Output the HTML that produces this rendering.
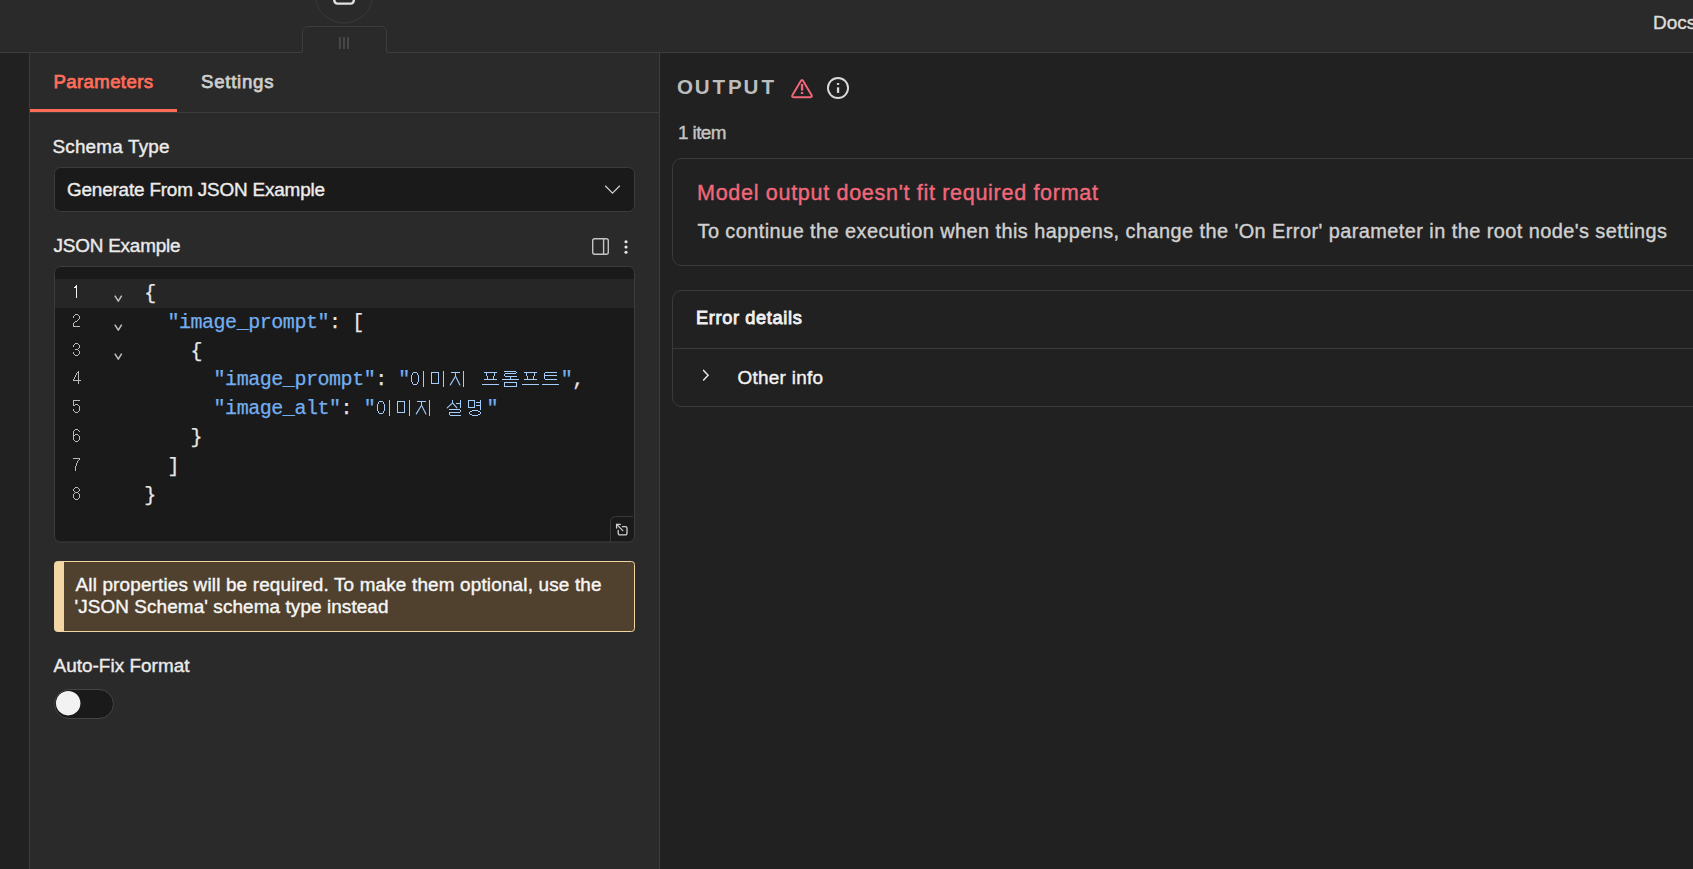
<!DOCTYPE html>
<html><head><meta charset="utf-8">
<style>
html,body{margin:0;padding:0;width:1693px;height:869px;overflow:hidden;background:#2a2a2a;position:relative}
</style></head><body>
<svg width="1693" height="869" viewBox="0 0 1693 869" style="position:absolute;left:0;top:0;font-family:'Liberation Sans',sans-serif">
<rect x="0" y="0" width="1693" height="53" fill="#2a2a2a"/>
<rect x="0" y="53" width="30" height="816" fill="#212121"/>
<rect x="30" y="53" width="630" height="816" fill="#2a2a2a"/>
<rect x="660" y="53" width="1033" height="816" fill="#212121"/>
<g fill="#3d3d3d" shape-rendering="crispEdges">
<rect x="0" y="52" width="1693" height="1"/>
<rect x="29" y="53" width="1" height="816"/>
<rect x="659" y="53" width="1" height="816"/>
</g>
<circle cx="344" cy="-6" r="29" fill="#2a2a2a" stroke="#3a3a3a" stroke-width="1"/>
<rect x="334.3" y="-8.5" width="19.5" height="12.1" rx="3" fill="none" stroke="#e2e2e2" stroke-width="2.4"/>
<path d="M302.5 53 V31.5 a5 5 0 0 1 5 -5 H381.5 a5 5 0 0 1 5 5 V53" fill="#2a2a2a" stroke="#3d3d3d" stroke-width="1"/>
<rect x="302" y="52" width="85" height="1" fill="#2a2a2a"/>
<g fill="#474747"><rect x="338.9" y="37" width="2" height="12" rx="0.6"/><rect x="343" y="37" width="2" height="12" rx="0.6"/><rect x="347" y="37" width="2" height="12" rx="0.6"/></g>
<text x="1653" y="28.5" font-size="19" font-weight="normal" fill="#dcdcdc" stroke="#dcdcdc" stroke-width="0.4">Docs</text>
<text x="53.5" y="87.5" font-size="18.6" font-weight="normal" fill="#ff6d5a" stroke="#ff6d5a" stroke-width="0.75" textLength="99.5" lengthAdjust="spacing">Parameters</text>
<text x="201" y="87.5" font-size="18.6" font-weight="normal" fill="#cecece" stroke="#cecece" stroke-width="0.75" textLength="72.5" lengthAdjust="spacing">Settings</text>
<rect x="30" y="112" width="629" height="1" fill="#3d3d3d" shape-rendering="crispEdges"/>
<rect x="30" y="109" width="147" height="3" fill="#ff6d5a" shape-rendering="crispEdges"/>
<text x="52.5" y="152.5" font-size="18.9" font-weight="normal" fill="#ebebeb" stroke="#ebebeb" stroke-width="0.4" textLength="117" lengthAdjust="spacing">Schema Type</text>
<rect x="54.5" y="167.5" width="580" height="44" rx="6" fill="#1a1a1a" stroke="#3c3c3c"/>
<text x="67" y="195.5" font-size="18.9" font-weight="normal" fill="#ececec" stroke="#ececec" stroke-width="0.4" textLength="258" lengthAdjust="spacing">Generate From JSON Example</text>
<path d="M605.2 185.8 L612.5 193.1 L619.8 185.8" fill="none" stroke="#cdcdcd" stroke-width="1.3"/>
<text x="53.5" y="252.0" font-size="18.9" font-weight="normal" fill="#ebebeb" stroke="#ebebeb" stroke-width="0.4" textLength="127" lengthAdjust="spacing">JSON Example</text>
<rect x="592.7" y="238.7" width="15.6" height="15.6" rx="2" fill="none" stroke="#c4c4c4" stroke-width="1.4"/>
<line x1="603.6" y1="238.7" x2="603.6" y2="254.3" stroke="#c4c4c4" stroke-width="1.4"/>
<g fill="#e8e8e8"><circle cx="626" cy="241.8" r="1.55"/><circle cx="626" cy="247" r="1.55"/><circle cx="626" cy="252.3" r="1.55"/></g>
<rect x="54.5" y="266.5" width="580" height="275.5" rx="6" fill="#1a1a1a" stroke="#3c3c3c"/>
<rect x="55" y="279" width="579" height="29" fill="#262626"/>
<g font-family="Liberation Mono" font-size="20" style="white-space:pre"><text x="144.30" y="298.90" fill="#e6e6e6" stroke="#e6e6e6" stroke-width="0.25">{</text><text x="167.39 178.94 190.48 202.03 213.58 225.12 236.67 248.21 259.76 271.31 282.85 294.40 305.94 317.49" y="327.70" fill="#73aff0" stroke="#73aff0" stroke-width="0.25">"image_prompt"</text><text x="329.04" y="327.70" fill="#e6e6e6" stroke="#e6e6e6" stroke-width="0.25">:</text><text x="352.13" y="327.70" fill="#e6e6e6" stroke="#e6e6e6" stroke-width="0.25">[</text><text x="190.48" y="356.50" fill="#e6e6e6" stroke="#e6e6e6" stroke-width="0.25">{</text><text x="213.58 225.12 236.67 248.21 259.76 271.31 282.85 294.40 305.94 317.49 329.04 340.58 352.13 363.67" y="385.30" fill="#73aff0" stroke="#73aff0" stroke-width="0.25">"image_prompt"</text><text x="375.22" y="385.30" fill="#e6e6e6" stroke="#e6e6e6" stroke-width="0.25">:</text><text x="398.31" y="385.30" fill="#73aff0" stroke="#73aff0" stroke-width="0.25">"</text><text x="560.70" y="385.30" fill="#73aff0" stroke="#73aff0" stroke-width="0.25">"</text><text x="572.30" y="385.30" fill="#e6e6e6" stroke="#e6e6e6" stroke-width="0.25">,</text><text x="213.58 225.12 236.67 248.21 259.76 271.31 282.85 294.40 305.94 317.49 329.04" y="414.10" fill="#73aff0" stroke="#73aff0" stroke-width="0.25">"image_alt"</text><text x="340.58" y="414.10" fill="#e6e6e6" stroke="#e6e6e6" stroke-width="0.25">:</text><text x="363.67" y="414.10" fill="#73aff0" stroke="#73aff0" stroke-width="0.25">"</text><text x="486.50" y="414.10" fill="#73aff0" stroke="#73aff0" stroke-width="0.25">"</text><text x="190.48" y="442.90" fill="#e6e6e6" stroke="#e6e6e6" stroke-width="0.25">}</text><text x="167.39" y="471.70" fill="#e6e6e6" stroke="#e6e6e6" stroke-width="0.25">]</text><text x="144.30" y="500.50" fill="#e6e6e6" stroke="#e6e6e6" stroke-width="0.25">}</text></g><g fill="#f2f2f2" shape-rendering="crispEdges"><rect x="76" y="285" width="1" height="1"/><rect x="76" y="286" width="1" height="1"/><rect x="75" y="286" width="1" height="1"/><rect x="74" y="287" width="1" height="1"/><rect x="75" y="287" width="1" height="1"/><rect x="76" y="287" width="1" height="1"/><rect x="76" y="288" width="1" height="1"/><rect x="76" y="289" width="1" height="1"/><rect x="76" y="290" width="1" height="1"/><rect x="76" y="291" width="1" height="1"/><rect x="76" y="292" width="1" height="1"/><rect x="76" y="293" width="1" height="1"/><rect x="76" y="294" width="1" height="1"/><rect x="76" y="295" width="1" height="1"/><rect x="76" y="296" width="1" height="1"/><rect x="76" y="297" width="1" height="1"/></g><g fill="#bababa" shape-rendering="crispEdges"><rect x="75" y="314" width="1" height="1"/><rect x="76" y="314" width="1" height="1"/><rect x="77" y="314" width="1" height="1"/><rect x="74" y="315" width="1" height="1"/><rect x="78" y="315" width="1" height="1"/><rect x="73" y="316" width="1" height="1"/><rect x="79" y="316" width="1" height="1"/><rect x="73" y="317" width="1" height="1"/><rect x="79" y="317" width="1" height="1"/><rect x="79" y="318" width="1" height="1"/><rect x="78" y="319" width="1" height="1"/><rect x="77" y="320" width="1" height="1"/><rect x="75" y="321" width="1" height="1"/><rect x="76" y="321" width="1" height="1"/><rect x="74" y="322" width="1" height="1"/><rect x="73" y="323" width="1" height="1"/><rect x="73" y="324" width="1" height="1"/><rect x="73" y="325" width="1" height="1"/><rect x="73" y="326" width="1" height="1"/><rect x="74" y="326" width="1" height="1"/><rect x="75" y="326" width="1" height="1"/><rect x="76" y="326" width="1" height="1"/><rect x="77" y="326" width="1" height="1"/><rect x="78" y="326" width="1" height="1"/><rect x="79" y="326" width="1" height="1"/></g><g fill="#bababa" shape-rendering="crispEdges"><rect x="75" y="343" width="1" height="1"/><rect x="76" y="343" width="1" height="1"/><rect x="77" y="343" width="1" height="1"/><rect x="74" y="344" width="1" height="1"/><rect x="78" y="344" width="1" height="1"/><rect x="73" y="345" width="1" height="1"/><rect x="79" y="345" width="1" height="1"/><rect x="73" y="346" width="1" height="1"/><rect x="79" y="346" width="1" height="1"/><rect x="79" y="347" width="1" height="1"/><rect x="78" y="348" width="1" height="1"/><rect x="75" y="349" width="1" height="1"/><rect x="76" y="349" width="1" height="1"/><rect x="77" y="349" width="1" height="1"/><rect x="78" y="350" width="1" height="1"/><rect x="79" y="351" width="1" height="1"/><rect x="73" y="352" width="1" height="1"/><rect x="79" y="352" width="1" height="1"/><rect x="73" y="353" width="1" height="1"/><rect x="79" y="353" width="1" height="1"/><rect x="74" y="354" width="1" height="1"/><rect x="78" y="354" width="1" height="1"/><rect x="75" y="355" width="1" height="1"/><rect x="76" y="355" width="1" height="1"/><rect x="77" y="355" width="1" height="1"/></g><g fill="#bababa" shape-rendering="crispEdges"><rect x="78" y="371" width="1" height="1"/><rect x="77" y="372" width="1" height="1"/><rect x="78" y="372" width="1" height="1"/><rect x="76" y="373" width="1" height="1"/><rect x="78" y="373" width="1" height="1"/><rect x="76" y="374" width="1" height="1"/><rect x="78" y="374" width="1" height="1"/><rect x="75" y="375" width="1" height="1"/><rect x="78" y="375" width="1" height="1"/><rect x="75" y="376" width="1" height="1"/><rect x="78" y="376" width="1" height="1"/><rect x="74" y="377" width="1" height="1"/><rect x="78" y="377" width="1" height="1"/><rect x="74" y="378" width="1" height="1"/><rect x="78" y="378" width="1" height="1"/><rect x="73" y="379" width="1" height="1"/><rect x="78" y="379" width="1" height="1"/><rect x="73" y="380" width="1" height="1"/><rect x="74" y="380" width="1" height="1"/><rect x="75" y="380" width="1" height="1"/><rect x="76" y="380" width="1" height="1"/><rect x="77" y="380" width="1" height="1"/><rect x="78" y="380" width="1" height="1"/><rect x="79" y="380" width="1" height="1"/><rect x="80" y="380" width="1" height="1"/><rect x="78" y="381" width="1" height="1"/><rect x="78" y="382" width="1" height="1"/><rect x="78" y="383" width="1" height="1"/></g><g fill="#bababa" shape-rendering="crispEdges"><rect x="73" y="400" width="1" height="1"/><rect x="74" y="400" width="1" height="1"/><rect x="75" y="400" width="1" height="1"/><rect x="76" y="400" width="1" height="1"/><rect x="77" y="400" width="1" height="1"/><rect x="78" y="400" width="1" height="1"/><rect x="79" y="400" width="1" height="1"/><rect x="73" y="401" width="1" height="1"/><rect x="73" y="402" width="1" height="1"/><rect x="73" y="403" width="1" height="1"/><rect x="73" y="404" width="1" height="1"/><rect x="75" y="404" width="1" height="1"/><rect x="76" y="404" width="1" height="1"/><rect x="77" y="404" width="1" height="1"/><rect x="73" y="405" width="1" height="1"/><rect x="74" y="405" width="1" height="1"/><rect x="78" y="405" width="1" height="1"/><rect x="79" y="406" width="1" height="1"/><rect x="79" y="407" width="1" height="1"/><rect x="79" y="408" width="1" height="1"/><rect x="73" y="409" width="1" height="1"/><rect x="79" y="409" width="1" height="1"/><rect x="73" y="410" width="1" height="1"/><rect x="79" y="410" width="1" height="1"/><rect x="74" y="411" width="1" height="1"/><rect x="78" y="411" width="1" height="1"/><rect x="75" y="412" width="1" height="1"/><rect x="76" y="412" width="1" height="1"/><rect x="77" y="412" width="1" height="1"/></g><g fill="#bababa" shape-rendering="crispEdges"><rect x="75" y="429" width="1" height="1"/><rect x="76" y="429" width="1" height="1"/><rect x="77" y="429" width="1" height="1"/><rect x="74" y="430" width="1" height="1"/><rect x="78" y="430" width="1" height="1"/><rect x="73" y="431" width="1" height="1"/><rect x="79" y="431" width="1" height="1"/><rect x="73" y="432" width="1" height="1"/><rect x="73" y="433" width="1" height="1"/><rect x="73" y="434" width="1" height="1"/><rect x="75" y="434" width="1" height="1"/><rect x="76" y="434" width="1" height="1"/><rect x="77" y="434" width="1" height="1"/><rect x="73" y="435" width="1" height="1"/><rect x="74" y="435" width="1" height="1"/><rect x="78" y="435" width="1" height="1"/><rect x="73" y="436" width="1" height="1"/><rect x="79" y="436" width="1" height="1"/><rect x="73" y="437" width="1" height="1"/><rect x="79" y="437" width="1" height="1"/><rect x="73" y="438" width="1" height="1"/><rect x="79" y="438" width="1" height="1"/><rect x="73" y="439" width="1" height="1"/><rect x="79" y="439" width="1" height="1"/><rect x="74" y="440" width="1" height="1"/><rect x="78" y="440" width="1" height="1"/><rect x="75" y="441" width="1" height="1"/><rect x="76" y="441" width="1" height="1"/><rect x="77" y="441" width="1" height="1"/></g><g fill="#bababa" shape-rendering="crispEdges"><rect x="73" y="458" width="1" height="1"/><rect x="74" y="458" width="1" height="1"/><rect x="75" y="458" width="1" height="1"/><rect x="76" y="458" width="1" height="1"/><rect x="77" y="458" width="1" height="1"/><rect x="78" y="458" width="1" height="1"/><rect x="79" y="458" width="1" height="1"/><rect x="79" y="459" width="1" height="1"/><rect x="78" y="460" width="1" height="1"/><rect x="77" y="461" width="1" height="1"/><rect x="77" y="462" width="1" height="1"/><rect x="76" y="463" width="1" height="1"/><rect x="76" y="464" width="1" height="1"/><rect x="76" y="465" width="1" height="1"/><rect x="75" y="466" width="1" height="1"/><rect x="75" y="467" width="1" height="1"/><rect x="75" y="468" width="1" height="1"/><rect x="75" y="469" width="1" height="1"/><rect x="75" y="470" width="1" height="1"/></g><g fill="#bababa" shape-rendering="crispEdges"><rect x="75" y="487" width="1" height="1"/><rect x="76" y="487" width="1" height="1"/><rect x="77" y="487" width="1" height="1"/><rect x="74" y="488" width="1" height="1"/><rect x="78" y="488" width="1" height="1"/><rect x="73" y="489" width="1" height="1"/><rect x="79" y="489" width="1" height="1"/><rect x="73" y="490" width="1" height="1"/><rect x="79" y="490" width="1" height="1"/><rect x="74" y="491" width="1" height="1"/><rect x="78" y="491" width="1" height="1"/><rect x="75" y="492" width="1" height="1"/><rect x="76" y="492" width="1" height="1"/><rect x="77" y="492" width="1" height="1"/><rect x="74" y="493" width="1" height="1"/><rect x="78" y="493" width="1" height="1"/><rect x="73" y="494" width="1" height="1"/><rect x="79" y="494" width="1" height="1"/><rect x="73" y="495" width="1" height="1"/><rect x="79" y="495" width="1" height="1"/><rect x="73" y="496" width="1" height="1"/><rect x="79" y="496" width="1" height="1"/><rect x="73" y="497" width="1" height="1"/><rect x="79" y="497" width="1" height="1"/><rect x="74" y="498" width="1" height="1"/><rect x="78" y="498" width="1" height="1"/><rect x="75" y="499" width="1" height="1"/><rect x="76" y="499" width="1" height="1"/><rect x="77" y="499" width="1" height="1"/></g><g fill="none" stroke="#bdbdbd" stroke-width="1.55" stroke-linejoin="round"><path d="M114.8 295.6 L118.3 301.2 L121.7 295.6"/><path d="M114.8 324.6 L118.3 330.2 L121.7 324.6"/><path d="M114.8 353.6 L118.3 359.2 L121.7 353.6"/></g>
<g fill="#a3cdfb" shape-rendering="crispEdges"><rect x="413" y="372" width="4" height="1"/><rect x="412" y="373" width="1" height="2"/><rect x="417" y="373" width="1" height="2"/><rect x="411" y="375" width="1" height="7"/><rect x="418" y="375" width="1" height="7"/><rect x="412" y="382" width="1" height="2"/><rect x="417" y="382" width="1" height="2"/><rect x="413" y="384" width="4" height="1"/><rect x="423" y="371" width="1" height="16"/><rect x="431" y="372" width="8" height="1"/><rect x="431" y="383" width="8" height="1"/><rect x="431" y="372" width="1" height="12"/><rect x="438" y="372" width="1" height="12"/><rect x="443" y="371" width="1" height="16"/><rect x="451" y="372" width="9" height="1"/><rect x="455" y="373" width="1" height="4"/><rect x="463" y="371" width="1" height="16"/><rect x="379" y="401" width="4" height="1"/><rect x="378" y="402" width="1" height="2"/><rect x="383" y="402" width="1" height="2"/><rect x="377" y="404" width="1" height="7"/><rect x="384" y="404" width="1" height="7"/><rect x="378" y="411" width="1" height="2"/><rect x="383" y="411" width="1" height="2"/><rect x="379" y="413" width="4" height="1"/><rect x="389" y="400" width="1" height="16"/><rect x="397" y="401" width="8" height="1"/><rect x="397" y="412" width="8" height="1"/><rect x="397" y="401" width="1" height="12"/><rect x="404" y="401" width="1" height="12"/><rect x="409" y="400" width="1" height="16"/><rect x="417" y="401" width="9" height="1"/><rect x="421" y="402" width="1" height="4"/><rect x="429" y="400" width="1" height="16"/><rect x="484" y="372" width="13" height="1"/><rect x="486" y="373" width="1" height="3"/><rect x="487" y="376" width="1" height="3"/><rect x="494" y="373" width="1" height="3"/><rect x="493" y="376" width="1" height="3"/><rect x="484" y="379" width="13" height="1"/><rect x="482" y="384" width="17" height="1"/><rect x="524" y="372" width="13" height="1"/><rect x="526" y="373" width="1" height="3"/><rect x="527" y="376" width="1" height="3"/><rect x="534" y="373" width="1" height="3"/><rect x="533" y="376" width="1" height="3"/><rect x="524" y="379" width="13" height="1"/><rect x="522" y="384" width="17" height="1"/><rect x="504" y="371" width="12" height="1"/><rect x="516" y="372" width="1" height="1"/><rect x="505" y="373" width="11" height="1"/><rect x="504" y="374" width="1" height="2"/><rect x="505" y="376" width="12" height="1"/><rect x="510" y="377" width="1" height="2"/><rect x="502" y="379" width="17" height="1"/><rect x="504" y="382" width="13" height="1"/><rect x="504" y="386" width="13" height="1"/><rect x="504" y="382" width="1" height="5"/><rect x="516" y="382" width="1" height="5"/><rect x="545" y="372" width="12" height="1"/><rect x="545" y="375" width="12" height="1"/><rect x="545" y="379" width="12" height="1"/><rect x="544" y="373" width="1" height="6"/><rect x="542" y="384" width="17" height="1"/><rect x="452" y="400" width="1" height="3"/><rect x="460" y="400" width="1" height="8"/><rect x="456" y="403" width="4" height="1"/><rect x="449" y="409" width="11" height="1"/><rect x="460" y="410" width="1" height="2"/><rect x="449" y="412" width="11" height="1"/><rect x="449" y="413" width="1" height="2"/><rect x="450" y="415" width="11" height="1"/><rect x="468" y="400" width="7" height="1"/><rect x="468" y="407" width="7" height="1"/><rect x="468" y="400" width="1" height="8"/><rect x="474" y="400" width="1" height="8"/><rect x="480" y="400" width="1" height="10"/><rect x="476" y="402" width="4" height="1"/><rect x="476" y="405" width="4" height="1"/><rect x="472" y="410" width="6" height="1"/><rect x="470" y="411" width="2" height="1"/><rect x="478" y="411" width="2" height="1"/><rect x="469" y="412" width="1" height="2"/><rect x="480" y="412" width="1" height="2"/><rect x="470" y="414" width="2" height="1"/><rect x="478" y="414" width="2" height="1"/><rect x="472" y="415" width="6" height="1"/></g><g stroke="#a3cdfb" stroke-width="1.1" stroke-linecap="round"><line x1="455.2" y1="376.8" x2="450.3" y2="384.9"/><line x1="455.8" y1="376.8" x2="459.9" y2="384.9"/><line x1="421.2" y1="405.8" x2="416.3" y2="413.9"/><line x1="421.8" y1="405.8" x2="425.9" y2="413.9"/><line x1="452.3" y1="403.2" x2="447.2" y2="407.9"/><line x1="452.7" y1="403.2" x2="456.9" y2="407.9"/></g>
<path d="M610.5 542 V521.5 a5 5 0 0 1 5 -5 H633" fill="none" stroke="#383838"/>
<g fill="none" stroke="#d2d2d2" stroke-width="1.3" stroke-linecap="round" stroke-linejoin="round"><path d="M622.4 526.7 H625.4 a1.6 1.6 0 0 1 1.6 1.6 V533.3 a1.6 1.6 0 0 1 -1.6 1.6 H619.8 a1.6 1.6 0 0 1 -1.6 -1.6 V530.4"/><path d="M622.8 530.6 L616.6 524.4"/><path d="M620.3 524.4 H616.6 V528.1"/></g>
<rect x="54.5" y="561.5" width="580" height="70" rx="3" fill="#50412f" stroke="#f0d4a2"/>
<path d="M57.5 561.5 H64 V631.5 H57.5 a3 3 0 0 1 -3 -3 V564.5 a3 3 0 0 1 3 -3 Z" fill="#f3d6a6"/>
<text x="75.5" y="590.5" font-size="18.9" font-weight="normal" fill="#f6f6f6" stroke="#f6f6f6" stroke-width="0.4" textLength="526" lengthAdjust="spacing">All properties will be required. To make them optional, use the</text>
<text x="74.5" y="612.5" font-size="18.9" font-weight="normal" fill="#f6f6f6" stroke="#f6f6f6" stroke-width="0.4" textLength="314" lengthAdjust="spacing">'JSON Schema' schema type instead</text>
<text x="53.5" y="671.5" font-size="18.9" font-weight="normal" fill="#ebebeb" stroke="#ebebeb" stroke-width="0.4" textLength="136" lengthAdjust="spacing">Auto-Fix Format</text>
<rect x="54.5" y="689.5" width="59" height="29" rx="14.5" fill="#1a1a1a" stroke="#454545"/>
<circle cx="68.2" cy="703.2" r="12.2" fill="#f2f2f2"/>
<text x="677.0 694.8 712.6 728.0 743.6 761.4" y="94.2" font-size="20.6" font-weight="bold" fill="#bdbdbd">OUTPUT</text>
<path d="M800.68 81.14 L792.52 94.96 Q791.20 97.20 793.80 97.20 L810.20 97.20 Q812.80 97.20 811.48 94.96 L803.32 81.14 Q802.00 78.90 800.68 81.14 Z" fill="none" stroke="#f0687a" stroke-width="1.95" stroke-linejoin="round"/>
<g fill="#f0687a"><rect x="800.9" y="84" width="2.3" height="6.6"/><rect x="800.9" y="92" width="2.3" height="2"/></g>
<circle cx="838" cy="88" r="10.05" fill="none" stroke="#dadada" stroke-width="1.9"/>
<g fill="#dadada"><rect x="836.9" y="87.3" width="2.3" height="5.6"/><rect x="836.9" y="83" width="2.3" height="1.9"/></g>
<text x="678" y="139.0" font-size="18.9" font-weight="normal" fill="#c4c4c4" stroke="#c4c4c4" stroke-width="0.4" textLength="48.5" lengthAdjust="spacing">1 item</text>
<rect x="672.5" y="158.5" width="1100" height="107" rx="9" fill="#212121" stroke="#3a3a3a"/>
<text x="697" y="199.5" font-size="21.6" font-weight="normal" fill="#f0687a" stroke="#f0687a" stroke-width="0.4" textLength="401" lengthAdjust="spacing">Model output doesn't fit required format</text>
<text x="697.5" y="238.2" font-size="19.9" font-weight="normal" fill="#d0d0d0" stroke="#d0d0d0" stroke-width="0.4" textLength="969.5" lengthAdjust="spacing">To continue the execution when this happens, change the 'On Error' parameter in the root node's settings</text>
<rect x="672.5" y="290.5" width="1100" height="116" rx="9" fill="#212121" stroke="#3a3a3a"/>
<rect x="673" y="348" width="1020" height="1" fill="#3a3a3a" shape-rendering="crispEdges"/>
<text x="696" y="324.3" font-size="18.2" font-weight="normal" fill="#f0f0f0" stroke="#f0f0f0" stroke-width="0.85" textLength="105.8" lengthAdjust="spacing">Error details</text>
<path d="M703.6 370.4 L708.1 375.2 L703.6 380.0" fill="none" stroke="#e8e8e8" stroke-width="1.5" stroke-linecap="round"/>
<text x="737.5" y="383.8" font-size="18.9" font-weight="normal" fill="#f2f2f2" stroke="#f2f2f2" stroke-width="0.4" textLength="85.5" lengthAdjust="spacing">Other info</text>
</svg>
</body></html>
